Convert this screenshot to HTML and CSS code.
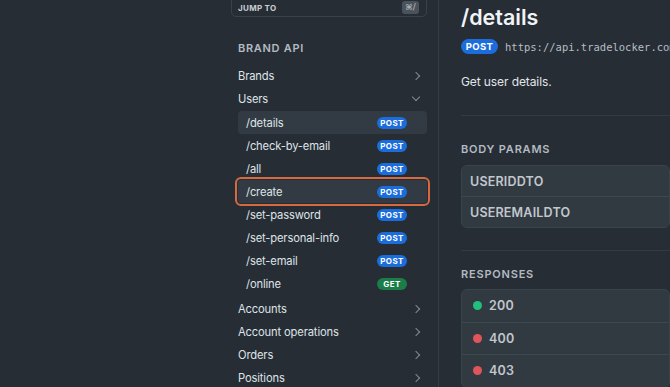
FILE: index.html
```html
<!DOCTYPE html>
<html lang="en">
<head>
  <meta charset="UTF-8">
  <title>/details - Brand API</title>
  <link rel="stylesheet" href="styles.css">
</head>
<body>

<div class="layout">
  <div class="gutter"></div>

  <aside class="sidebar">
    <div class="jump">
      <span>JUMP TO</span>
      <kbd>⌘/</kbd>
    </div>

    <div class="group-title">BRAND API</div>

    <ul class="nav">
      <li class="nav-item">Brands <span class="chev right"></span></li>
      <li class="nav-item">Users <span class="chev down"></span></li>
      <li>
        <ul class="sub">
          <li class="sub-item active">/details <span class="badge post">POST</span></li>
          <li class="sub-item">/check-by-email <span class="badge post">POST</span></li>
          <li class="sub-item">/all <span class="badge post">POST</span></li>
          <li class="sub-item active focused">/create <span class="badge post">POST</span></li>
          <li class="sub-item">/set-password <span class="badge post">POST</span></li>
          <li class="sub-item">/set-personal-info <span class="badge post">POST</span></li>
          <li class="sub-item">/set-email <span class="badge post">POST</span></li>
          <li class="sub-item">/online <span class="badge get">GET</span></li>
        </ul>
      </li>
      <li class="nav-item">Accounts <span class="chev right"></span></li>
      <li class="nav-item">Account operations <span class="chev right"></span></li>
      <li class="nav-item">Orders <span class="chev right"></span></li>
      <li class="nav-item">Positions <span class="chev right"></span></li>
    </ul>
  </aside>

  <main class="content">
    <h1>/details</h1>
    <div class="endpoint">
      <span class="badge big post">POST</span>
      <code>https://api.tradelocker.com/brand-api/users/details</code>
    </div>
    <p class="desc">Get user details.</p>

    <hr class="first">

    <h2>BODY PARAMS</h2>
    <div class="card params">
      <div class="row">USERIDDTO</div>
      <div class="row">USEREMAILDTO</div>
    </div>

    <hr>

    <h2 class="tight">RESPONSES</h2>
    <div class="card responses">
      <div class="row"><span class="dot ok"></span>200</div>
      <div class="row"><span class="dot err"></span>400</div>
      <div class="row"><span class="dot err"></span>403</div>
    </div>
  </main>
</div>

</body>
</html>
```

FILE: styles.css
```css
html, body {
  margin: 0;
  height: 100%;
  overflow: hidden;
}
body {
  background-color: #262d35;
  color: #e3e6e9;
  font-family: Inter, "Noto Sans", sans-serif;
  white-space: nowrap;
}
.layout {
  display: grid;
  grid-template-columns: 222px 217px 1fr;
  height: 100%;
}

/* sidebar */
.sidebar {
  border-right: 1px solid #343d45;
  padding: 0 11px 0 9px;
}
.jump {
  margin-top: -14px;
  height: 31px;
  border: 1px solid #39424a;
  border-radius: 5px;
  display: flex;
  align-items: center;
  justify-content: space-between;
  padding: 13px 7px 0 6px;
  box-sizing: border-box;
  font-size: 8px;
  font-weight: 700;
  letter-spacing: 0.3px;
  color: #c9ced3;
}
.jump kbd {
  font-family: "DejaVu Sans", sans-serif;
  font-size: 8px;
  line-height: 13px;
  height: 13px;
  background-color: #4a535b;
  color: #a9b0b7;
  border-radius: 3px;
  padding: 0 3px;
  margin-top: -1px;
}
.group-title {
  margin: 24px 0 0 7px;
  height: 15px;
  line-height: 15px;
  font-size: 11px;
  font-weight: 600;
  letter-spacing: 0.7px;
  color: #b3bac1;
}
.nav, .sub {
  list-style: none;
  margin: 0;
  padding: 0;
}
.nav {
  margin: 8px 0 0 7px;
}
.nav-item {
  height: 23px;
  display: flex;
  align-items: center;
  justify-content: space-between;
  padding-right: 8px;
  font-size: 11.2px;
  letter-spacing: -0.15px;
  color: #dfe3e7;
}
.sub {
  padding: 1px 0 2px;
}
.sub-item {
  height: 23px;
  display: flex;
  align-items: center;
  justify-content: space-between;
  padding: 0 20px 0 8px;
  border-radius: 4px;
  font-size: 11.2px;
  letter-spacing: -0.15px;
  color: #dfe3e7;
}
.sub-item.active {
  background-color: #323b43;
}
.sub-item.focused {
  outline: 2px solid #d66a3e;
  outline-offset: 1px;
  border-radius: 3px;
}
.chev {
  width: 5px;
  height: 5px;
  border-right: 1.3px solid #838b93;
  border-bottom: 1.3px solid #838b93;
}
.chev.right {
  transform: rotate(-45deg);
}
.chev.down {
  transform: rotate(45deg);
  margin-top: -3px;
}

/* method badges */
.badge {
  display: inline-block;
  flex-shrink: 0;
  width: 30px;
  height: 12px;
  line-height: 12px;
  border-radius: 6px;
  text-align: center;
  font-size: 8px;
  font-weight: 700;
  letter-spacing: 0.4px;
  color: #fff;
}
.badge.post {
  background-color: #1c6ddc;
}
.badge.get {
  background-color: #1b7d47;
}
.badge.big {
  width: 37px;
  height: 15px;
  line-height: 15px;
  border-radius: 8px;
  font-size: 9.5px;
}

/* main */
.content {
  padding-left: 22px;
  min-width: 0;
}
h1 {
  margin: 2px 0 0;
  font-size: 21.5px;
  line-height: 30px;
  font-weight: 600;
  color: #f1f3f5;
}
.endpoint {
  display: flex;
  align-items: center;
  gap: 7px;
  margin-top: 7px;
}
.endpoint code {
  font-family: "DejaVu Sans Mono", monospace;
  font-size: 10.5px;
  color: #b6bdc4;
}
.desc {
  margin: 19px 0 0;
  font-size: 12px;
  line-height: 17px;
  letter-spacing: -0.1px;
  color: #e3e6e9;
}
hr {
  border: none;
  border-top: 1px solid #323b43;
  margin: 22px 0 0;
}
hr.first {
  margin-top: 25px;
}
h2 {
  margin: 26px 0 0;
  font-size: 11px;
  line-height: 14px;
  font-weight: 600;
  letter-spacing: 0.8px;
  color: #b3bac1;
}
h2.tight {
  margin-top: 16px;
}
.card {
  background-color: #313a41;
  border: 1px solid #39434b;
  border-radius: 6px;
  margin-top: 8px;
}
.params {
  margin-top: 9px;
}
.card .row {
  display: flex;
  align-items: center;
  padding-left: 8px;
  font-size: 12.5px;
  font-weight: 600;
  letter-spacing: 0.2px;
  color: #c1c7cd;
}
.card .row + .row {
  border-top: 1px solid #3d474f;
}
.params .row {
  height: 30px;
}
.responses .row {
  height: 31.5px;
  padding-left: 11px;
}
.dot {
  width: 9px;
  height: 9px;
  border-radius: 50%;
  margin-right: 7px;
}
.dot.ok {
  background-color: #22c07f;
}
.dot.err {
  background-color: #e0555a;
}
```
